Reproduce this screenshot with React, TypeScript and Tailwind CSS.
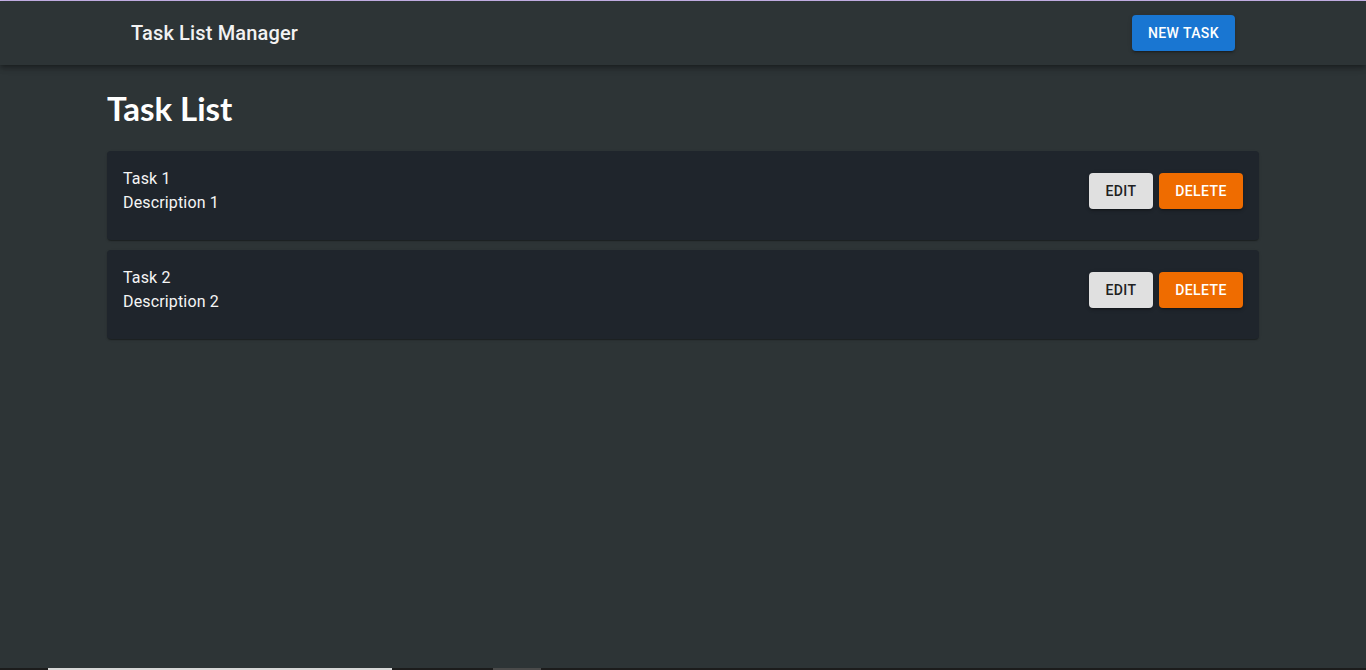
import React from "react";

const tasks = [
  { title: "Task 1", description: "Description 1" },
  { title: "Task 2", description: "Description 2" },
];

export default function App() {
  return (
    <div
      className="flex h-[670px] w-full flex-col overflow-hidden bg-[#2d3436] text-white"
      style={{ fontFamily: "Roboto, 'Liberation Sans', sans-serif" }}
    >
      <div className="h-px w-full bg-[#cdb8f0]" />
      <header className="relative z-10 h-16 w-full bg-[#2d3436] shadow-[0_2px_4px_-1px_rgba(0,0,0,0.25),0_4px_5px_0_rgba(0,0,0,0.16),0_1px_10px_0_rgba(0,0,0,0.12)]">
        <div className="mx-auto flex h-full max-w-[1200px] items-center justify-between px-12">
          <h2 className="text-[20px] font-medium leading-8 tracking-[0.15px] text-[#f2f2f2]">
            Task List Manager
          </h2>
          <button className="h-9 rounded bg-[#1976d2] px-4 text-[14px] font-medium uppercase tracking-[0.4px] text-white shadow-[0_3px_1px_-2px_rgba(0,0,0,0.2),0_2px_2px_0_rgba(0,0,0,0.14),0_1px_5px_0_rgba(0,0,0,0.12)]">
            New Task
          </button>
        </div>
      </header>
      <main className="mx-auto w-full max-w-[1200px] flex-1 px-6">
        <h1
          className="mt-[22px] mb-[22px] text-[33px] font-bold leading-[42px] text-white"
          style={{ fontFamily: "Lato, 'Open Sans', sans-serif" }}
        >
          Task List
        </h1>
        <div className="flex flex-col gap-[10px]">
          {tasks.map((t) => (
            <div
              key={t.title}
              className="flex items-center justify-between rounded bg-[#1f252c] px-4 pt-4 pb-[25px] shadow-[0_2px_1px_-1px_rgba(0,0,0,0.2),0_1px_1px_0_rgba(0,0,0,0.14),0_1px_3px_0_rgba(0,0,0,0.12)]"
            >
              <div className="text-[16px] leading-6 tracking-[0.15px] text-[#f5f5f5]">
                <div>{t.title}</div>
                <div>{t.description}</div>
              </div>
              <div className="flex gap-[6px]">
                <button className="h-9 w-16 rounded bg-[#e0e0e0] text-[14px] font-medium uppercase tracking-[0.4px] text-[#212121] shadow-[0_3px_1px_-2px_rgba(0,0,0,0.2),0_2px_2px_0_rgba(0,0,0,0.14),0_1px_5px_0_rgba(0,0,0,0.12)]">
                  Edit
                </button>
                <button className="h-9 w-[84px] rounded bg-[#ef6c00] text-[14px] font-medium uppercase tracking-[0.4px] text-white shadow-[0_3px_1px_-2px_rgba(0,0,0,0.2),0_2px_2px_0_rgba(0,0,0,0.14),0_1px_5px_0_rgba(0,0,0,0.12)]">
                  Delete
                </button>
              </div>
            </div>
          ))}
        </div>
      </main>
      <div className="flex h-[2px] w-full bg-[#1c1c1c]">
        <div className="ml-12 w-[344px] bg-[#d8d8d8]" />
        <div className="ml-[101px] w-12 bg-[#4a4a4a]" />
      </div>
    </div>
  );
}
